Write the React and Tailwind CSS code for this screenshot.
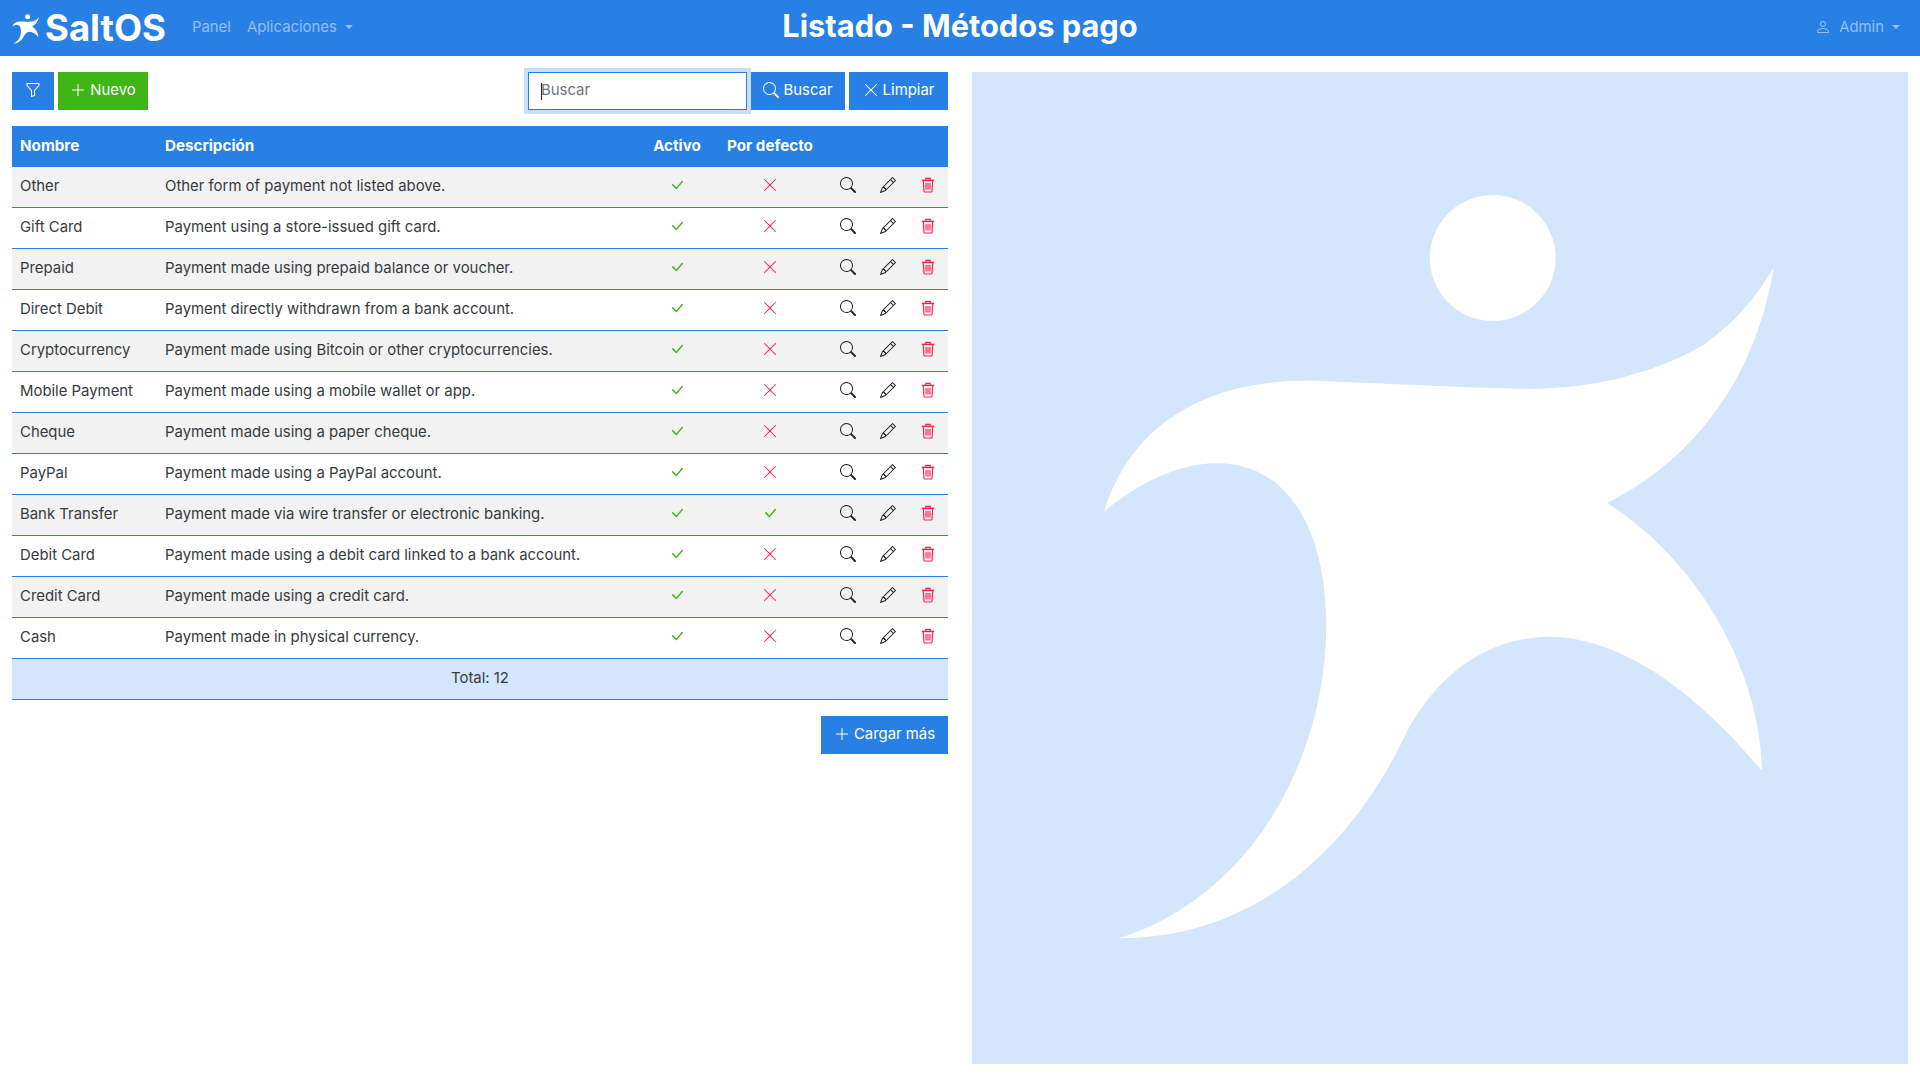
import { BsFunnel, BsPlusLg, BsSearch, BsXLg, BsCheckLg, BsPencil, BsPerson } from "react-icons/bs"

const LOGO_PATH = "M1773.8 267.3 C1756 377 1695 459 1607.3 503.1 C1695 559 1759 664 1762.2 771.1 C1695 691 1621 636.8 1547.9 636.8 C1480.5 638 1431.5 682 1404 737.7 C1345.8 858 1247.8 938.3 1119.2 938.3 C1260 893 1327.4 746.5 1326.2 623.3 C1326 535 1290.7 463.2 1217.2 463.2 C1168.2 463.2 1125 494 1103.9 511.9 C1131.5 424 1205 380.5 1309 380.5 L1474.4 387.6 L1529.5 388.7 C1603 388.7 1664 368 1704 344.7 C1743.8 315.4 1760 290 1773.8 267.3 Z"

const rows = [
  { name: "Other", desc: "Other form of payment not listed above." },
  { name: "Gift Card", desc: "Payment using a store-issued gift card." },
  { name: "Prepaid", desc: "Payment made using prepaid balance or voucher." },
  { name: "Direct Debit", desc: "Payment directly withdrawn from a bank account." },
  { name: "Cryptocurrency", desc: "Payment made using Bitcoin or other cryptocurrencies." },
  { name: "Mobile Payment", desc: "Payment made using a mobile wallet or app." },
  { name: "Cheque", desc: "Payment made using a paper cheque." },
  { name: "PayPal", desc: "Payment made using a PayPal account." },
  { name: "Bank Transfer", desc: "Payment made via wire transfer or electronic banking.", isDefault: true },
  { name: "Debit Card", desc: "Payment made using a debit card linked to a bank account." },
  { name: "Credit Card", desc: "Payment made using a credit card." },
  { name: "Cash", desc: "Payment made in physical currency." },
]

const Caret = () => (
  <span className="ml-2 inline-block w-0 h-0 border-x-[4.8px] border-x-transparent border-t-[4.8px] border-t-current" />
)

const TrashIcon = () => (
  <svg viewBox="0 0 16 16" fill="none" stroke="currentColor" strokeWidth="1.15" className="w-4 h-4 mx-auto -mt-1 text-[#ff1f4f]">
    <path d="M1.8 3.4h12.4" strokeWidth="1.5" />
    <path d="M5.8 3V1.3h4.4V3" />
    <path d="M3.3 3.6l.6 10.4a1 1 0 0 0 1 1h6.2a1 1 0 0 0 1-1l.6-10.4" />
    <path d="M6 6v6.6M8 6v6.6M10 6v6.6" />
  </svg>
)

const Navbar = () => (
  <nav className="grid grid-cols-[1fr_auto_1fr] items-center h-14 bg-[#2880e5] pl-3 pr-5">
    <div className="flex items-center">
      <svg viewBox="1100 195 678 746" className="w-[27px] h-[30px] mt-0.5 fill-white">
        <circle cx="1492.7" cy="258" r="63" />
        <path d={LOGO_PATH} />
      </svg>
      <span className="ml-[6px] text-[36.5px] leading-none font-bold text-white">SaltOS</span>
      <span className="ml-[26px] pb-[2px] text-[#93bff2]">Panel</span>
      <span className="ml-4 pb-[2px] flex items-center text-[#93bff2]">Aplicaciones<Caret /></span>
    </div>
    <h1 className="ml-2 pb-1 text-[30.8px] leading-none font-bold text-white">Listado - Métodos pago</h1>
    <div className="flex items-center justify-end pb-[2px] text-[#93bff2]">
      <BsPerson className="w-4 h-4 mr-2" />
      Admin
      <Caret />
    </div>
  </nav>
)

const Toolbar = () => (
  <div className="flex items-center h-[38px]">
    <button className="flex items-center justify-center w-[42px] h-[38px] pb-[2px] bg-[#2880e5] text-white"><BsFunnel className="w-4 h-4" /></button>
    <button className="flex items-center justify-center ml-1 w-[90px] h-[38px] pb-[2px] bg-[#40b518] text-white"><BsPlusLg className="w-4 h-4 mr-1" />Nuevo</button>
    <div className="relative ml-auto w-[219px] h-[38px]">
      <input
        readOnly
        placeholder="Buscar"
        className="w-full h-full px-3 pb-[2px] border border-[#2880e5] bg-white outline-none ring-4 ring-[#c9dff9] placeholder:text-[#6c757d]"
      />
      <span className="absolute left-[13px] top-[11px] w-px h-[17px] bg-[#212529]" />
    </div>
    <button className="flex items-center justify-center ml-1 w-[94px] h-[38px] pb-[2px] bg-[#2880e5] text-white"><BsSearch className="w-4 h-4 mr-1" />Buscar</button>
    <button className="flex items-center justify-center ml-1 w-[99px] h-[38px] pb-[2px] bg-[#2880e5] text-white"><BsXLg className="w-4 h-4 mr-1" />Limpiar</button>
  </div>
)

const Table = () => (
  <table className="w-full mt-4 border-separate border-spacing-0 table-fixed">
    <colgroup>
      <col className="w-[145px]" />
      <col />
      <col className="w-[75px]" />
      <col className="w-[116px]" />
      <col className="w-10" />
      <col className="w-10" />
      <col className="w-10" />
    </colgroup>
    <thead>
      <tr className="h-[41px] bg-[#2880e5] text-white text-[15.2px]">
        <th className="px-2 text-left font-bold">Nombre</th>
        <th className="px-2 text-left font-bold">Descripción</th>
        <th className="pl-[5px] text-center font-bold">Activo</th>
        <th className="text-center font-bold">Por defecto</th>
        <th colSpan={3} />
      </tr>
    </thead>
    <tbody>
      {rows.map((row, i) => (
        <tr key={row.name} className={`h-[41px] ${i % 2 === 0 ? "bg-[#f2f2f2]" : "bg-white"}`}>
          <td className="px-2 pb-[2px] border-b border-[#2880e5]">{row.name}</td>
          <td className="px-2 pb-[2px] border-b border-[#2880e5]">{row.desc}</td>
          <td className="pl-[5px] border-b border-[#2880e5]"><BsCheckLg className="w-4 h-4 mx-auto -mt-1 text-[#40b518]" /></td>
          <td className="border-b border-[#2880e5]">
            {row.isDefault
              ? <BsCheckLg className="w-4 h-4 mx-auto -mt-1 text-[#40b518]" />
              : <BsXLg className="w-4 h-4 mx-auto -mt-1 text-[#ff1f4f]" />}
          </td>
          <td className="border-b border-[#2880e5]"><BsSearch className="w-4 h-4 mx-auto -mt-1 text-[#212529]" /></td>
          <td className="border-b border-[#2880e5]"><BsPencil className="w-4 h-4 mx-auto -mt-1 text-[#212529]" /></td>
          <td className="border-b border-[#2880e5]"><TrashIcon /></td>
        </tr>
      ))}
      <tr className="h-[41px] bg-[#d3e6fb]">
        <td colSpan={7} className="pb-[2px] border-b border-[#2880e5] text-center">Total: 12</td>
      </tr>
    </tbody>
  </table>
)

const App = () => {
  return (
    <div className="h-[1080px] bg-white text-[14.9px] text-[#373b40] font-['Inter',sans-serif] overflow-hidden">
      <Navbar />
      <div className="flex gap-6 px-3 pt-4">
        <div className="w-[936px]">
          <Toolbar />
          <Table />
          <div className="flex justify-end mt-4">
            <button className="flex items-center justify-center w-[127px] h-[38px] pb-[2px] bg-[#2880e5] text-white"><BsPlusLg className="w-4 h-4 mr-1" />Cargar más</button>
          </div>
        </div>
        <div className="w-[936px] h-[992px] bg-[#d3e6fb]">
          <svg viewBox="972 72 936 992" className="w-full h-full fill-white">
            <circle cx="1492.7" cy="258" r="63" />
            <path d={LOGO_PATH} />
          </svg>
        </div>
      </div>
    </div>
  )
}

export default App
